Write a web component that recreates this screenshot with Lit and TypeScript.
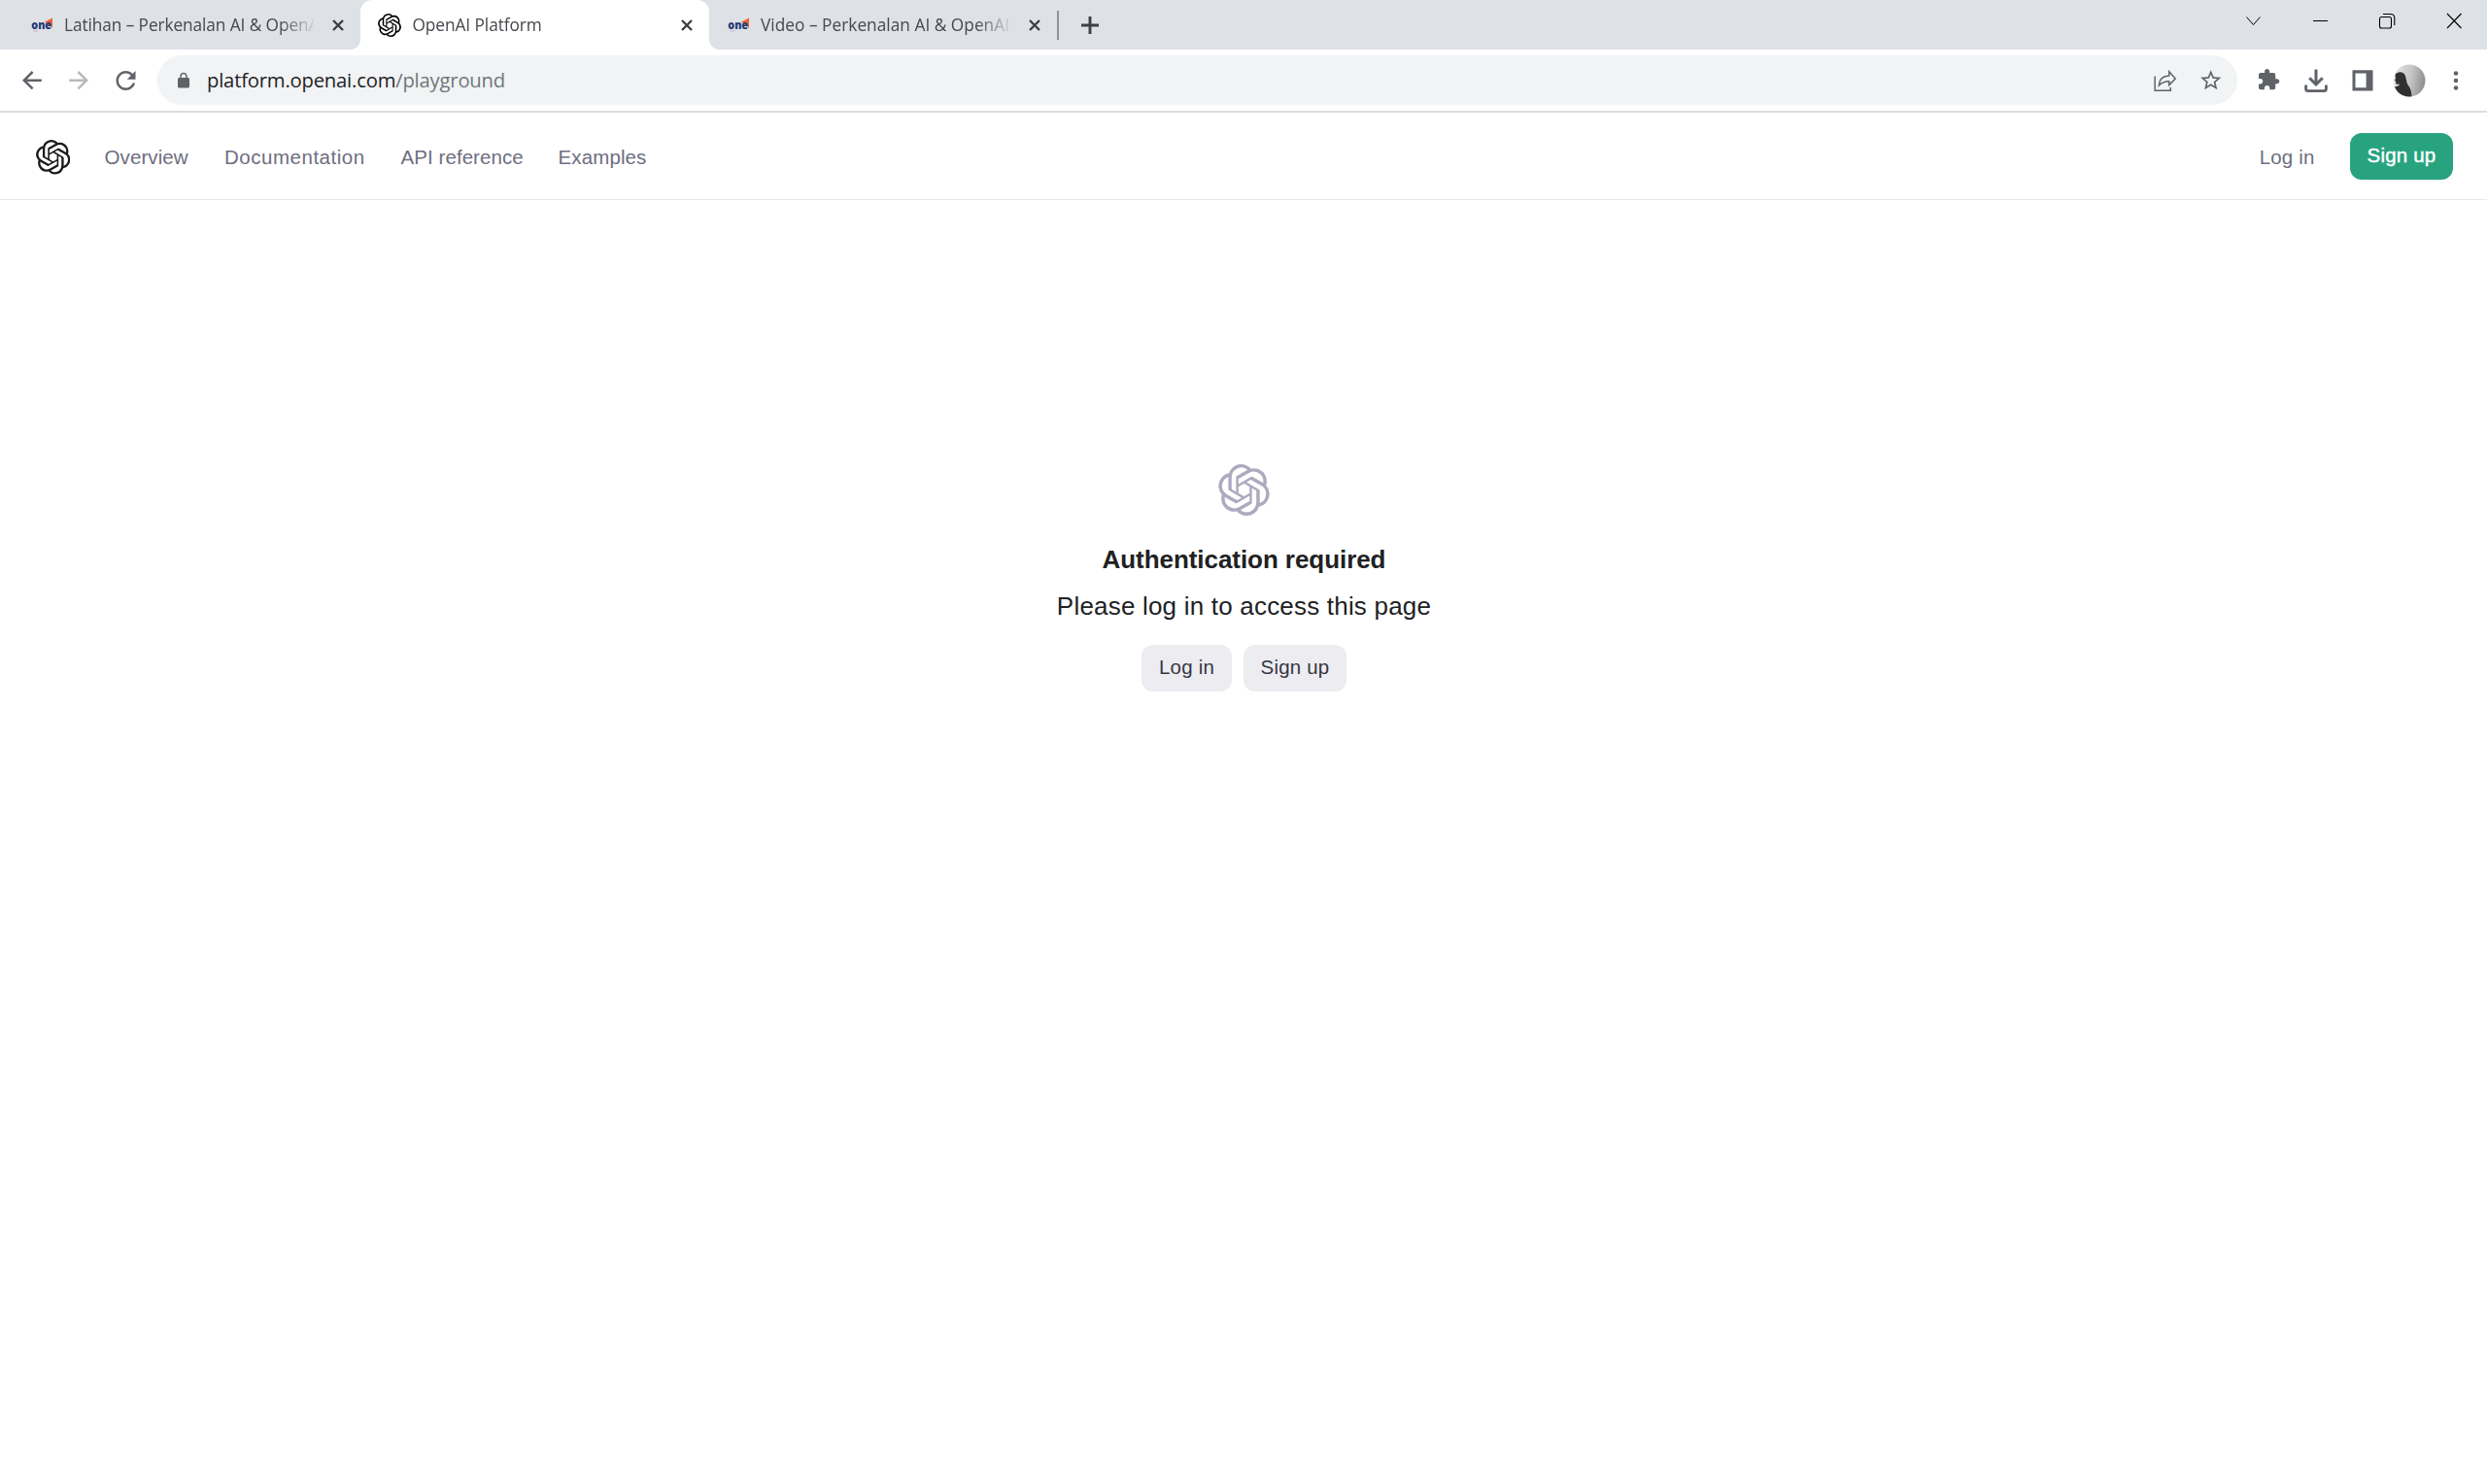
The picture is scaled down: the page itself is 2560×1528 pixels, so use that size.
import { LitElement, html, svg, css } from "lit";
import { customElement, property } from "lit/decorators.js";

const KNOT =
  "M22.2819 9.8211a5.9847 5.9847 0 0 0-.5157-4.9108 6.0462 6.0462 0 0 0-6.5098-2.9A6.0651 6.0651 0 0 0 4.9807 4.1818a5.9847 5.9847 0 0 0-3.9977 2.9 6.0462 6.0462 0 0 0 .7427 7.0966 5.98 5.98 0 0 0 .511 4.9107 6.051 6.051 0 0 0 6.5146 2.9001A5.9847 5.9847 0 0 0 13.2599 24a6.0557 6.0557 0 0 0 5.7718-4.2058 5.9894 5.9894 0 0 0 3.9977-2.9001 6.0557 6.0557 0 0 0-.7475-7.0729zm-9.022 12.6081a4.4755 4.4755 0 0 1-2.8764-1.0408l.1419-.0804 4.7783-2.7582a.7948.7948 0 0 0 .3927-.6813v-6.7369l2.02 1.1686a.071.071 0 0 1 .038.052v5.5826a4.504 4.504 0 0 1-4.4945 4.4944zm-9.6607-4.1254a4.4708 4.4708 0 0 1-.5346-3.0137l.142.0852 4.783 2.7582a.7712.7712 0 0 0 .7806 0l5.8428-3.3685v2.3324a.0804.0804 0 0 1-.0332.0615L9.74 19.9502a4.4992 4.4992 0 0 1-6.1408-1.6464zM2.3408 7.8956a4.485 4.485 0 0 1 2.3655-1.9728V11.6a.7664.7664 0 0 0 .3879.6765l5.8144 3.3543-2.0201 1.1685a.0757.0757 0 0 1-.071 0l-4.8303-2.7865A4.504 4.504 0 0 1 2.3408 7.872zm16.5963 3.8558L13.1038 8.364 15.1192 7.2a.0757.0757 0 0 1 .071 0l4.8303 2.7913a4.4944 4.4944 0 0 1-.6765 8.1042v-5.6772a.79.79 0 0 0-.407-.667zm2.0107-3.0231l-.142-.0852-4.7735-2.7818a.7759.7759 0 0 0-.7854 0L9.409 9.2297V6.8974a.0662.0662 0 0 1 .0284-.0615l4.8303-2.7866a4.4992 4.4992 0 0 1 6.6802 4.66zM8.3065 12.863l-2.02-1.1638a.0804.0804 0 0 1-.038-.0567V6.0742a4.4992 4.4992 0 0 1 7.3757-3.4537l-.142.0805L8.704 5.459a.7948.7948 0 0 0-.3927.6813zm1.0976-2.3654l2.602-1.4998 2.6069 1.4998v2.9994l-2.5974 1.4997-2.6067-1.4997Z";

const knot = (size: number) => html`<svg width=${size} height=${size} viewBox="0 0 24 24" fill="currentColor"><path d=${KNOT}></path></svg>`;

/* Icon drawn around the origin, in a box of w by h pixels. */
const icon = (w: number, h: number, body: unknown) =>
  html`<svg width=${w} height=${h} viewBox="${-w / 2} ${-h / 2} ${w} ${h}" fill="none" stroke="currentColor">${body}</svg>`;

const oneFavicon = html`<svg class="fav" width="24" height="24" viewBox="30 14 24 24">
  <path d="M45 22.600 53 18.600v10.600l-2.500-3z" fill="#f0633a"></path>
  <path d="M33 31.400q1.800 1.400 5 .4" stroke="#c3b5c4" stroke-width="1" fill="none"></path>
  <text x="31.300" y="29.900" textLength="20.700" lengthAdjust="spacingAndGlyphs" font-family="Open Sans, sans-serif" font-weight="800" font-size="13" fill="#243a75">one</text>
</svg>`;

const closeX = icon(24, 24, svg`<path d="M-5-5 5 5M5-5-5 5" stroke-width="2.4"></path>`);

@customElement("browser-tab")
class BrowserTab extends LitElement {
  @property() label = "";
  @property({ type: Number }) spacing = 0;
  @property({ type: Boolean, reflect: true }) active = false;
  static styles = css`
    :host { display: flex; align-items: center; box-sizing: border-box; width: 358.5px; height: 51px; padding: 0 11px 0 18px; position: relative; }
    :host([active]) { background: #fff; border-radius: 12px 12px 0 0; color: #000; }
    :host([active])::before, :host([active])::after { content: ""; position: absolute; bottom: 0; width: 10px; height: 10px; }
    :host([active])::before { left: -10px; background: radial-gradient(circle at 0 0, transparent 9.5px, #fff 10.2px); }
    :host([active])::after { right: -10px; background: radial-gradient(circle at 100% 0, transparent 9.5px, #fff 10.2px); }
    svg { display: block; flex: none; overflow: visible; }
    .title { width: 257px; margin: 0 13px 0 11.5px; overflow: hidden; white-space: nowrap; font: 17.25px/26px "Open Sans", sans-serif; color: #45494d;
      -webkit-mask-image: linear-gradient(90deg, #000 222px, transparent 260px); mask-image: linear-gradient(90deg, #000 222px, transparent 260px); }
    .close { color: #3c4043; }
  `;
  render() {
    return html`${this.active ? knot(24) : oneFavicon}
      <div class="title" style="letter-spacing:${this.spacing}px">${this.label}</div>
      <div class="close">${closeX}</div>`;
  }
}

@customElement("browser-frame")
class BrowserFrame extends LitElement {
  static styles = css`
    :host { display: block; font-family: "Open Sans", sans-serif; }
    svg { display: block; flex: none; }
    .strip { display: flex; height: 51px; background: #dee1e6; padding-left: 12.5px; }
    .sep { width: 2px; height: 30px; margin: 11px 0 0 0; background: #919599; }
    .plus { margin: 10px 0 0 16px; color: #3c4043; }
    .win { display: flex; margin-left: auto; color: #000; }
    .toolbar { display: flex; align-items: center; height: 63px; border-bottom: 2px solid #dadcde; padding: 0 8.5px 0 9px; background: #fff; color: #5f6368; }
    .omni { display: flex; align-items: center; flex: 1; height: 51px; border-radius: 26px; background: #f1f3f4; margin: 0 8.5px 0 9px; padding: 0 3.5px 0 18px; }
    .url { flex: 1; margin-left: 15px; padding-bottom: 2px; font-size: 20.25px; line-height: 30px; color: #202124; letter-spacing: -0.2px; }
    .path { color: #70757a; }
    .off { color: #bababc; }
    .cell { width: 48px; display: flex; justify-content: center; }
  `;
  render() {
    return html`
      <div class="strip">
        <browser-tab label="Latihan – Perkenalan AI &amp; OpenAI" spacing="-0.08"></browser-tab>
        <browser-tab active label="OpenAI Platform" spacing="-0.06"></browser-tab>
        <browser-tab label="Video – Perkenalan AI &amp; OpenAI" spacing="0.03"></browser-tab>
        <div class="sep"></div>
        <div class="plus">${icon(32, 32, svg`<path d="M-9 0H9M0-9V9" stroke-width="2.9"></path>`)}</div>
        <div class="win">
          ${icon(69, 43, svg`<path d="M-7-4 0 4 7-4" stroke-width="1"></path>`)}
          ${icon(69, 43, svg`<path d="M-7.500 0H7.500" stroke-width="1"></path>`)}
          ${icon(69, 43, svg`<rect x="-8" y="-4" width="12" height="11.5" rx="2" stroke-width="1.1"></rect><path d="M-4.500-7H3.200Q7.300-7 7.300-3V4.500" stroke-width="1.1"></path>`)}
          ${icon(68, 43, svg`<path d="M-7-7.500 7.500 7.500M7.500-7.500-7 7.500" stroke-width="1.1"></path>`)}
        </div>
      </div>
      <div class="toolbar">
        <div class="cell">${icon(30, 30, svg`<path d="M9.8-.3H-8.4M.6-9-8.2-.3.6 8.4" stroke-width="2.5"></path>`)}</div>
        <div class="cell off">${icon(30, 30, svg`<path d="M-9.8-.3H8.4M-.6-9 8.2-.3-.6 8.4" stroke-width="2.5"></path>`)}</div>
        <div class="cell"><svg width="31" height="30" viewBox="0 0 24 24" fill="currentColor"><path d="M17.65 6.35C16.2 4.9 14.21 4 12 4c-4.42 0-7.99 3.58-7.99 8s3.57 8 7.99 8c3.73 0 6.84-2.55 7.73-6h-2.08c-.82 2.33-3.04 4-5.65 4-3.31 0-6-2.69-6-6s2.69-6 6-6c1.66 0 3.14.69 4.22 1.78L13 11h7V4l-2.35 2.35z"></path></svg></div>
        <div class="omni">
          <svg width="18" height="18" viewBox="0 0 24 24" fill="currentColor"><path d="M18 8h-1V6c0-2.76-2.24-5-5-5S7 3.24 7 6v2H6c-1.1 0-2 .9-2 2v10c0 1.1.9 2 2 2h12c1.1 0 2-.9 2-2V10c0-1.1-.9-2-2-2zM8.9 6c0-1.71 1.39-3.1 3.1-3.1s3.1 1.39 3.1 3.1v2H8.9V6z"></path></svg>
          <div class="url">platform.openai.com<span class="path">/playground</span></div>
          <div class="cell">${icon(30, 30, svg`<path d="M-9.8-4.5V10.3H6.3V7" stroke-width="1.5"></path><path d="M-5.7 5C-5.5-1-2-4.800 4.800-5V-9.200L11.200-2 4.800 4.600V.7C.2.7-3 2-5.700 5Z" stroke-width="1.5"></path>`)}</div>
          <div class="cell"><svg width="25.5" height="25.5" viewBox="0 0 24 24" fill="currentColor"><path d="M22 9.24l-7.19-.62L12 2 9.19 8.63 2 9.24l5.46 4.73L5.82 21 12 17.27 18.18 21l-1.63-7.03L22 9.24zM12 15.4l-3.76 2.27 1-4.28-3.32-2.88 4.38-.38L12 6.1l1.71 4.04 4.38.38-3.32 2.88 1 4.28L12 15.4z"></path></svg></div>
        </div>
        <div class="cell"><svg width="24.3" height="24.3" viewBox="0 0 24 24" fill="currentColor"><path d="M20.5 11H19V7c0-1.1-.9-2-2-2h-4V3.5C13 2.12 11.88 1 10.5 1S8 2.12 8 3.5V5H4c-1.1 0-1.99.9-1.99 2v3.8H3.5c1.49 0 2.7 1.21 2.7 2.7s-1.21 2.7-2.7 2.7H2V20c0 1.1.9 2 2 2h3.8v-1.5c0-1.49 1.21-2.7 2.7-2.7 1.49 0 2.7 1.21 2.7 2.7V22H17c1.1 0 2-.9 2-2v-4h1.5c1.38 0 2.5-1.12 2.5-2.5S21.88 11 20.5 11z"></path></svg></div>
        <div class="cell">${icon(30, 30, svg`<path d="M0-11.5V3.8M-6.800-2.800 0 4 6.800-2.800" stroke-width="3"></path><path d="M-10.400 4.500V8.500Q-10.400 10.600-8.300 10.600H8.300Q10.400 10.600 10.400 8.500V4.500" stroke-width="2.8"></path>`)}</div>
        <div class="cell">${icon(30, 30, svg`<path d="M-10.500-10.700H10.500V10.400H-10.500ZM-7.500-7.500V7.300H3.600V-7.500Z" fill="currentColor" fill-rule="evenodd" stroke="none"></path>`)}</div>
        <div class="cell">${icon(34, 34, svg`
          <defs><linearGradient id="sky" x1="0" y1="0" x2="1" y2="0.15"><stop offset="0" stop-color="#efefef"></stop><stop offset=".35" stop-color="#d2d2d2"></stop><stop offset=".6" stop-color="#c4c4c4"></stop><stop offset="1" stop-color="#929292"></stop></linearGradient>
          <clipPath id="disc"><circle r="16.5"></circle></clipPath></defs>
          <g clip-path="url(#disc)" stroke="none"><rect x="-17" y="-17" width="34" height="34" fill="url(#sky)"></rect>
          <path d="M-14.5-6C-13-9-9-9.5-6.5-8-4-6.5-3.7-4-3.2-1.5-2.8 1-2.2 3.5-1 5 1.5 8 2.5 12 2.5 17H-12L-17 7C-14 6-12 6-10.5 5L-10.3 3.5C-12 4-13.5 4-13.8 3L-13.7 1-15 0-14-2.5Z" fill="#303030"></path></g>`)}</div>
        <div class="cell">${icon(30, 30, svg`<g fill="currentColor" stroke="none"><circle cy="-7.5" r="2.3"></circle><circle r="2.3"></circle><circle cy="7.5" r="2.3"></circle></g>`)}</div>
      </div>`;
  }
}

@customElement("app-root")
class AppRoot extends LitElement {
  static styles = css`
    :host { display: block; height: 1528px; background: #fff; font-family: "Liberation Sans", Arial, sans-serif; overflow: hidden; }
    svg { display: block; }
    .header { display: flex; align-items: center; height: 89px; box-sizing: content-box; border-bottom: 1px solid #e7e7ea; padding: 0 35px 0 36.5px; color: #6e6e80; font-size: 20.5px; line-height: 30px; }
    .logo { color: #1b1b1b; padding-top: 2.5px; }
    .nav { display: grid; grid-template-columns: 123.5px 181.5px 162px auto; margin-left: 35.5px; padding-top: 3px; }
    .login { margin: 0 36.5px 0 auto; padding-top: 3px; letter-spacing: 0.15px; }
    .btn { display: flex; align-items: center; justify-content: center; box-sizing: border-box; height: 48px; padding-bottom: 2px; border-radius: 12px; background: #ececf1; color: #353740; font-size: 20.5px; letter-spacing: 0.2px; }
    .in { width: 93px; }
    .up { width: 106px; }
    .green { margin-top: 1px; background: #28a37f; color: #fff; -webkit-text-stroke: 0.4px #fff; }
    .gate { display: flex; flex-direction: column; align-items: center; padding: 272px 0 0 1px; color: #202123; font-size: 26px; line-height: 36px; }
    .mark { color: #acaabe; margin: 0 0 27px; }
    .head { font-weight: 700; letter-spacing: -0.06px; }
    .text { margin: 12px 0 22px; letter-spacing: 0.2px; }
    .actions { display: flex; gap: 12px; }
  `;
  render() {
    const nav: [string, number][] = [["Overview", 0.1], ["Documentation", 0.52], ["API reference", 0.07], ["Examples", 0.12]];
    return html`
      <browser-frame></browser-frame>
      <div class="header">
        <div class="logo">${knot(35.5)}</div>
        <div class="nav">${nav.map(([t, s]) => html`<span style="letter-spacing:${s}px">${t}</span>`)}</div>
        <div class="login">Log in</div>
        <div class="btn up green">Sign up</div>
      </div>
      <div class="gate">
        <div class="mark">${knot(53)}</div>
        <div class="head">Authentication required</div>
        <div class="text">Please log in to access this page</div>
        <div class="actions"><div class="btn in">Log in</div><div class="btn up">Sign up</div></div>
      </div>`;
  }
}
